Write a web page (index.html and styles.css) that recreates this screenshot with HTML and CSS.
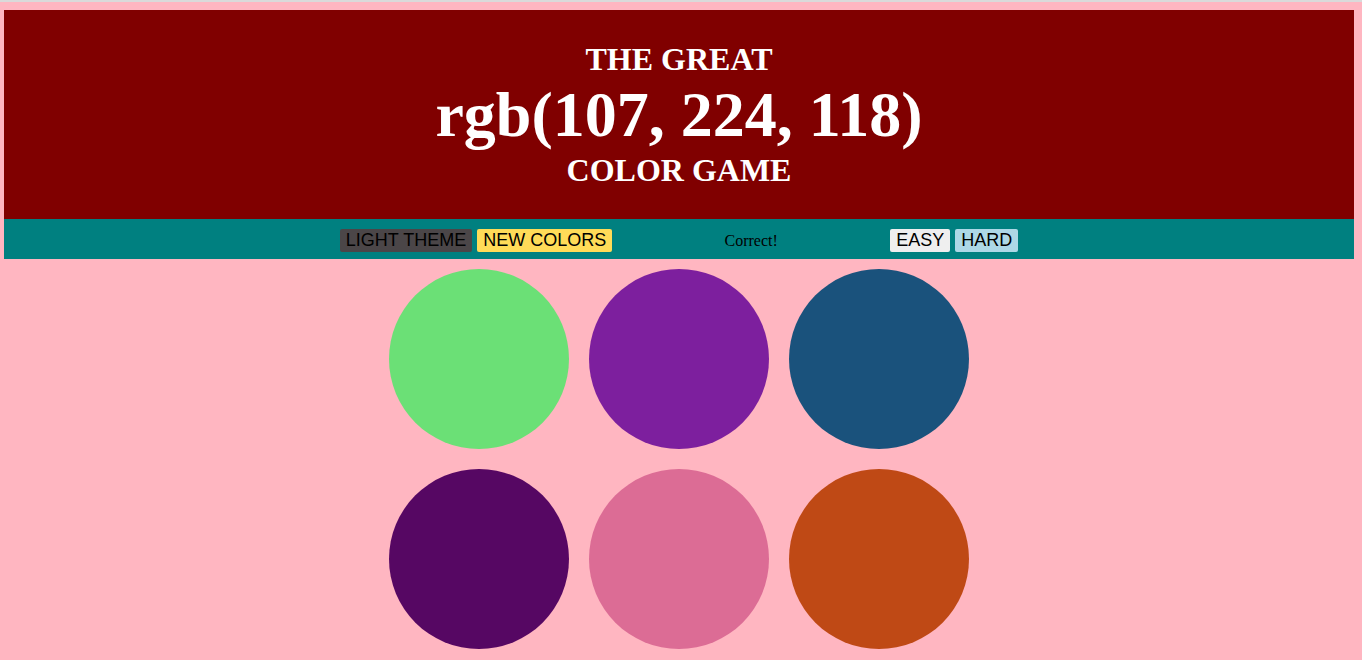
FILE: index.html
```html
<!DOCTYPE html>
<html>
<head>
<meta charset="utf-8">
<title>Color Game</title>
<link rel="stylesheet" href="styles.css">
</head>
<body>
<header class="header">
  <h1 class="title">THE GREAT<br><span class="color-display">rgb(107, 224, 118)</span><br>COLOR GAME</h1>
</header>
<nav class="stripe">
  <button class="btn btn-theme">LIGHT THEME</button>
  <button class="btn btn-new">NEW COLORS</button>
  <span class="message">Correct!</span>
  <button class="btn btn-easy">EASY</button>
  <button class="btn btn-hard">HARD</button>
</nav>
<main class="board">
  <div class="square" style="background: rgb(107, 224, 118)"></div>
  <div class="square" style="background: rgb(125, 31, 158)"></div>
  <div class="square" style="background: rgb(26, 82, 124)"></div>
  <div class="square" style="background: rgb(86, 7, 99)"></div>
  <div class="square" style="background: rgb(220, 108, 149)"></div>
  <div class="square" style="background: rgb(191, 73, 21)"></div>
</main>
</body>
</html>
```
FILE: styles.css
```css
html {
  border-top: 2px solid #dadada;
}
body {
  margin: 8px 8px 0 4px;
  background: #ffb6c1;
  font-family: "Liberation Serif", "Times New Roman", serif;
}
.header {
  background: #800000;
  color: #ffffff;
  text-align: center;
  padding: 31px 0 30px;
}
.title {
  margin: 0;
  font-size: 32px;
  font-weight: bold;
  line-height: normal;
}
.color-display {
  font-size: 64px;
}
.stripe {
  background: #008080;
  height: 40px;
  display: flex;
  align-items: center;
  justify-content: center;
  gap: 5px;
}
.btn {
  font-family: "Liberation Sans", Arial, sans-serif;
  font-size: 18px;
  color: #000;
  border: none;
  border-radius: 2px;
  padding: 1px 6px;
  height: 23px;
  line-height: 21px;
  margin-top: 2px;
}
.btn-theme { background: #4b4648; }
.btn-new { background: #ffdb58; }
.btn-easy { background: #efefef; }
.btn-hard { background: #add8e6; }
.message {
  width: 268px;
  text-align: center;
  font-size: 16px;
  color: #000;
  margin-top: 3px;
}
.board {
  width: 600px;
  margin: 0 auto;
  display: flex;
  flex-wrap: wrap;
}
.square {
  width: 180px;
  height: 180px;
  margin: 10px;
  border-radius: 50%;
}
```
